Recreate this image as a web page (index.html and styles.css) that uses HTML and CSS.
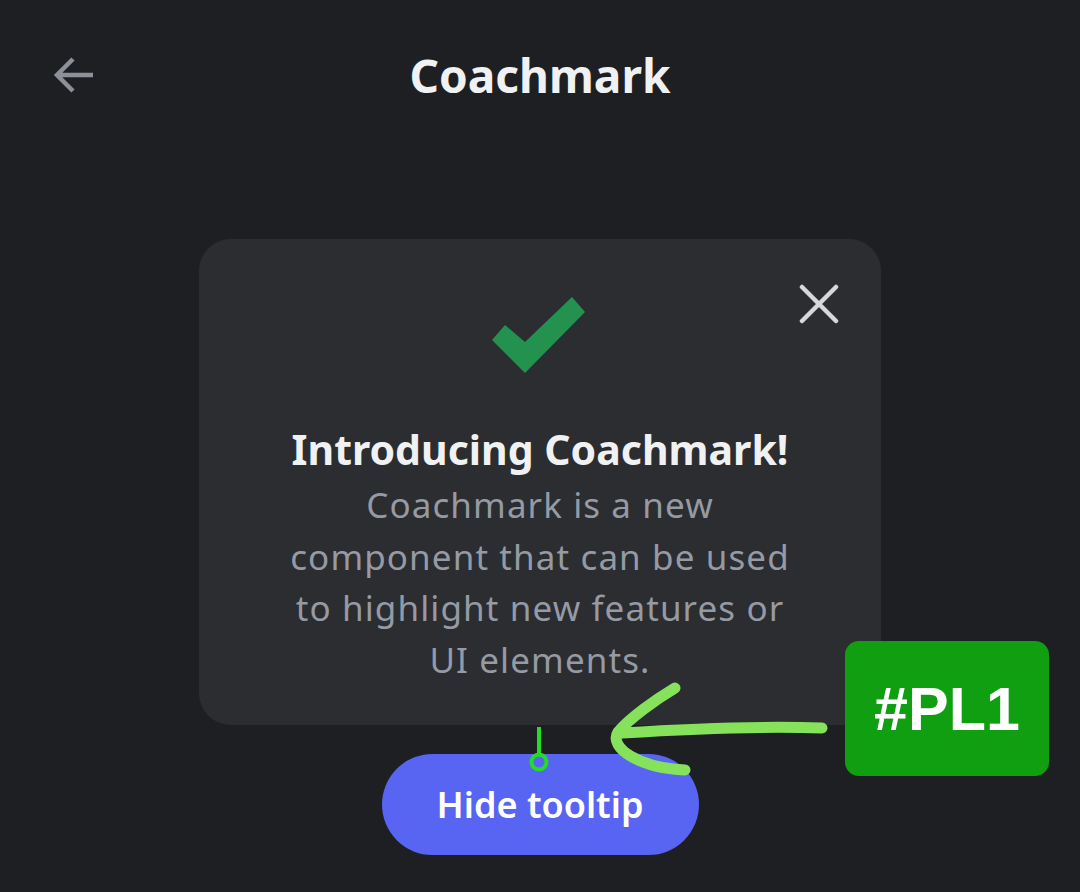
FILE: index.html
```html
<!DOCTYPE html>
<html>
<head>
<meta charset="utf-8">
<link rel="stylesheet" href="styles.css">
</head>
<body>
<div class="screen">
  <header class="topbar">
    <button class="back" aria-label="Back">
      <svg width="46" height="46" viewBox="0 0 46 46"><path d="M42 23H6M22 7L6 23l16 16" fill="none" stroke="#8e9099" stroke-width="4.5" stroke-linecap="butt" stroke-linejoin="miter"/></svg>
    </button>
    <h1 class="title">Coachmark</h1>
  </header>
  <main class="content">
    <section class="card">
      <button class="close" aria-label="Close">
        <svg width="40" height="40" viewBox="0 0 40 40"><path d="M3 3L37 37M37 3L3 37" stroke="#d6d8dc" stroke-width="4.5" stroke-linecap="round"/></svg>
      </button>
      <svg class="check" width="94" height="76" viewBox="0 0 94 76"><path d="M0 43L13 28L33 45L80 0L93 15L33 76Z" fill="#23924f"/></svg>
      <h2 class="heading">Introducing Coachmark!</h2>
      <p class="body">Coachmark is a new component that can be used to highlight new features or UI elements.</p>
    </section>
    <button class="cta">Hide tooltip</button>
  </main>
  <div class="tag">#PL1</div>
  <svg class="annot" width="1080" height="892" viewBox="0 0 1080 892">
    <path d="M539 727V755" stroke="#22dd22" stroke-width="4"/>
    <circle cx="539" cy="762" r="7.5" fill="none" stroke="#22dd22" stroke-width="4"/>
    <path d="M822 728C760 726 700 728 622 733M675 688C655 700 630 718 618 732C608 748 640 768 685 770" fill="none" stroke="#86e25a" stroke-width="11" stroke-linecap="round" stroke-linejoin="round"/>
  </svg>
</div>
</body>
</html>
```
FILE: styles.css
```css
* { box-sizing: border-box; }
html, body { margin: 0; padding: 0; background: #1e1f22; }
.screen {
  position: relative;
  width: 1080px;
  height: 892px;
  overflow: hidden;
  background: #1e1f22;
  font-family: "Noto Sans", "Open Sans", sans-serif;
}
.topbar {
  height: 150px;
  display: flex;
  align-items: flex-start;
  justify-content: center;
  position: relative;
  padding-top: 47px;
}
.back {
  position: absolute;
  left: 51px;
  top: 52px;
  background: none;
  border: 0;
  padding: 0;
  width: 46px;
  height: 46px;
}
.title {
  margin: 0;
  color: #f0f1f3;
  font-size: 46px;
  font-weight: 700;
  line-height: 56px;
}
.content {
  display: flex;
  flex-direction: column;
  align-items: center;
  padding-top: 89px;
}
.card {
  position: relative;
  width: 682px;
  height: 486px;
  background: #2b2d31;
  border-radius: 32px;
  display: flex;
  flex-direction: column;
  align-items: center;
  padding: 58px 40px 0;
  text-align: center;
}
.close {
  position: absolute;
  right: 42px;
  top: 45px;
  background: none;
  border: 0;
  padding: 0;
  width: 40px;
  height: 40px;
}
.check { display: block; margin-left: -2px; }
.heading {
  margin: 50px 0 0;
  color: #f0f1f3;
  font-size: 41px;
  font-weight: 700;
  line-height: 52px;
}
.body {
  margin: 4px 0 0;
  color: #959aa4;
  font-size: 35px;
  line-height: 51.5px;
  letter-spacing: 1.1px;
  font-weight: 400;
  width: 530px;
}
.cta {
  margin-top: 29px;
  width: 317px;
  height: 101px;
  border: 0;
  border-radius: 51px;
  background: #5865f2;
  color: #ffffff;
  font-family: "Noto Sans", "Open Sans", sans-serif;
  font-size: 36px;
  font-weight: 600;
}
.tag {
  position: absolute;
  left: 845px;
  top: 641px;
  width: 204px;
  height: 135px;
  background: #109f10;
  border-radius: 14px;
  color: #fff;
  font-family: "Liberation Sans", Arial, sans-serif;
  font-weight: 700;
  font-size: 61px;
  display: flex;
  align-items: center;
  justify-content: center;
}
.annot {
  position: absolute;
  left: 0;
  top: 0;
  pointer-events: none;
}
```
